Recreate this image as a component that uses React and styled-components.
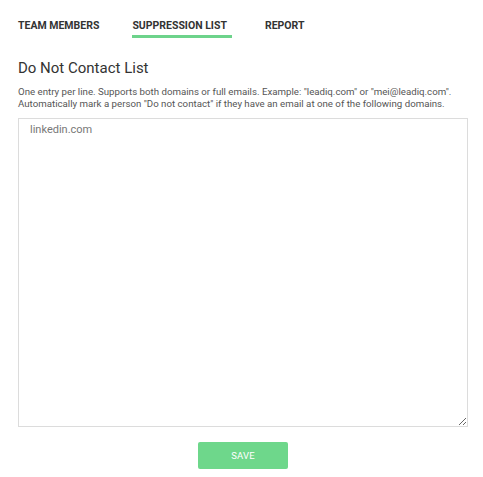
import React, { Component } from "react";
import styled, { createGlobalStyle } from "styled-components";

const GlobalStyle = createGlobalStyle`
  html, body {
    margin: 0;
    padding: 0;
    background: #ffffff;
  }
  body {
    font-family: Roboto, "Liberation Sans", Arial, sans-serif;
    color: #333333;
  }
`;

const Page = styled.div`
  padding: 0 15px 0 18px;
  width: 483px;
  box-sizing: border-box;
`;

const Tabs = styled.div`
  display: flex;
  gap: 33px;
  padding-top: 20px;
`;

const Tab = styled.div`
  font-size: 10.5px;
  font-weight: 700;
  color: #333333;
  line-height: 12px;
  padding-bottom: 3px;
  padding-right: ${(p) => (p.active ? "5px" : "0")};
  border-bottom: 3px solid ${(p) => (p.active ? "#6dd38b" : "transparent")};
  cursor: pointer;
`;

const Title = styled.h2`
  margin: 20px 0 0;
  font-size: 15px;
  font-weight: 400;
  color: #333333;
  line-height: 20px;
`;

const Hint = styled.p`
  margin: 8px 0 0;
  font-size: 9.7px;
  line-height: 12px;
  color: #555555;
`;

const ListInput = styled.textarea`
  display: block;
  margin-top: 8px;
  width: 450px;
  height: 309px;
  box-sizing: border-box;
  border: 1px solid #dcdcdc;
  border-radius: 0;
  padding: 3px 11px;
  font-family: Roboto, "Liberation Sans", Arial, sans-serif;
  font-size: 11px;
  line-height: 16px;
  color: #777777;
  outline: none;
`;

const Actions = styled.div`
  display: flex;
  justify-content: center;
  width: 450px;
  margin-top: 15px;
`;

const SaveButton = styled.button`
  width: 90px;
  height: 27px;
  border: none;
  border-radius: 2px;
  background-color: #6ed78b;
  color: #ffffff;
  font-family: Roboto, "Liberation Sans", Arial, sans-serif;
  font-size: 9.5px;
  font-weight: 400;
  letter-spacing: 0.2px;
  cursor: pointer;
`;

class App extends Component {
  constructor(props) {
    super(props);
    this.state = {
      tab: "suppression",
      domains: "linkedin.com",
    };
  }

  changeDomainsHandler = (event) => {
    this.setState({ domains: event.target.value });
  };

  render() {
    const tabs = [
      { id: "team", label: "TEAM MEMBERS" },
      { id: "suppression", label: "SUPPRESSION LIST" },
      { id: "report", label: "REPORT" },
    ];
    return (
      <Page>
        <GlobalStyle />
        <Tabs>
          {tabs.map((t) => (
            <Tab
              key={t.id}
              active={this.state.tab === t.id}
              onClick={() => this.setState({ tab: t.id })}
            >
              {t.label}
            </Tab>
          ))}
        </Tabs>
        <Title>Do Not Contact List</Title>
        <Hint>
          One entry per line. Supports both domains or full emails. Example: "leadiq.com" or "mei@leadiq.com".
          <br />
          Automatically mark a person "Do not contact" if they have an email at one of the following domains.
        </Hint>
        <ListInput value={this.state.domains} onChange={this.changeDomainsHandler} />
        <Actions>
          <SaveButton>SAVE</SaveButton>
        </Actions>
      </Page>
    );
  }
}

export default App;
